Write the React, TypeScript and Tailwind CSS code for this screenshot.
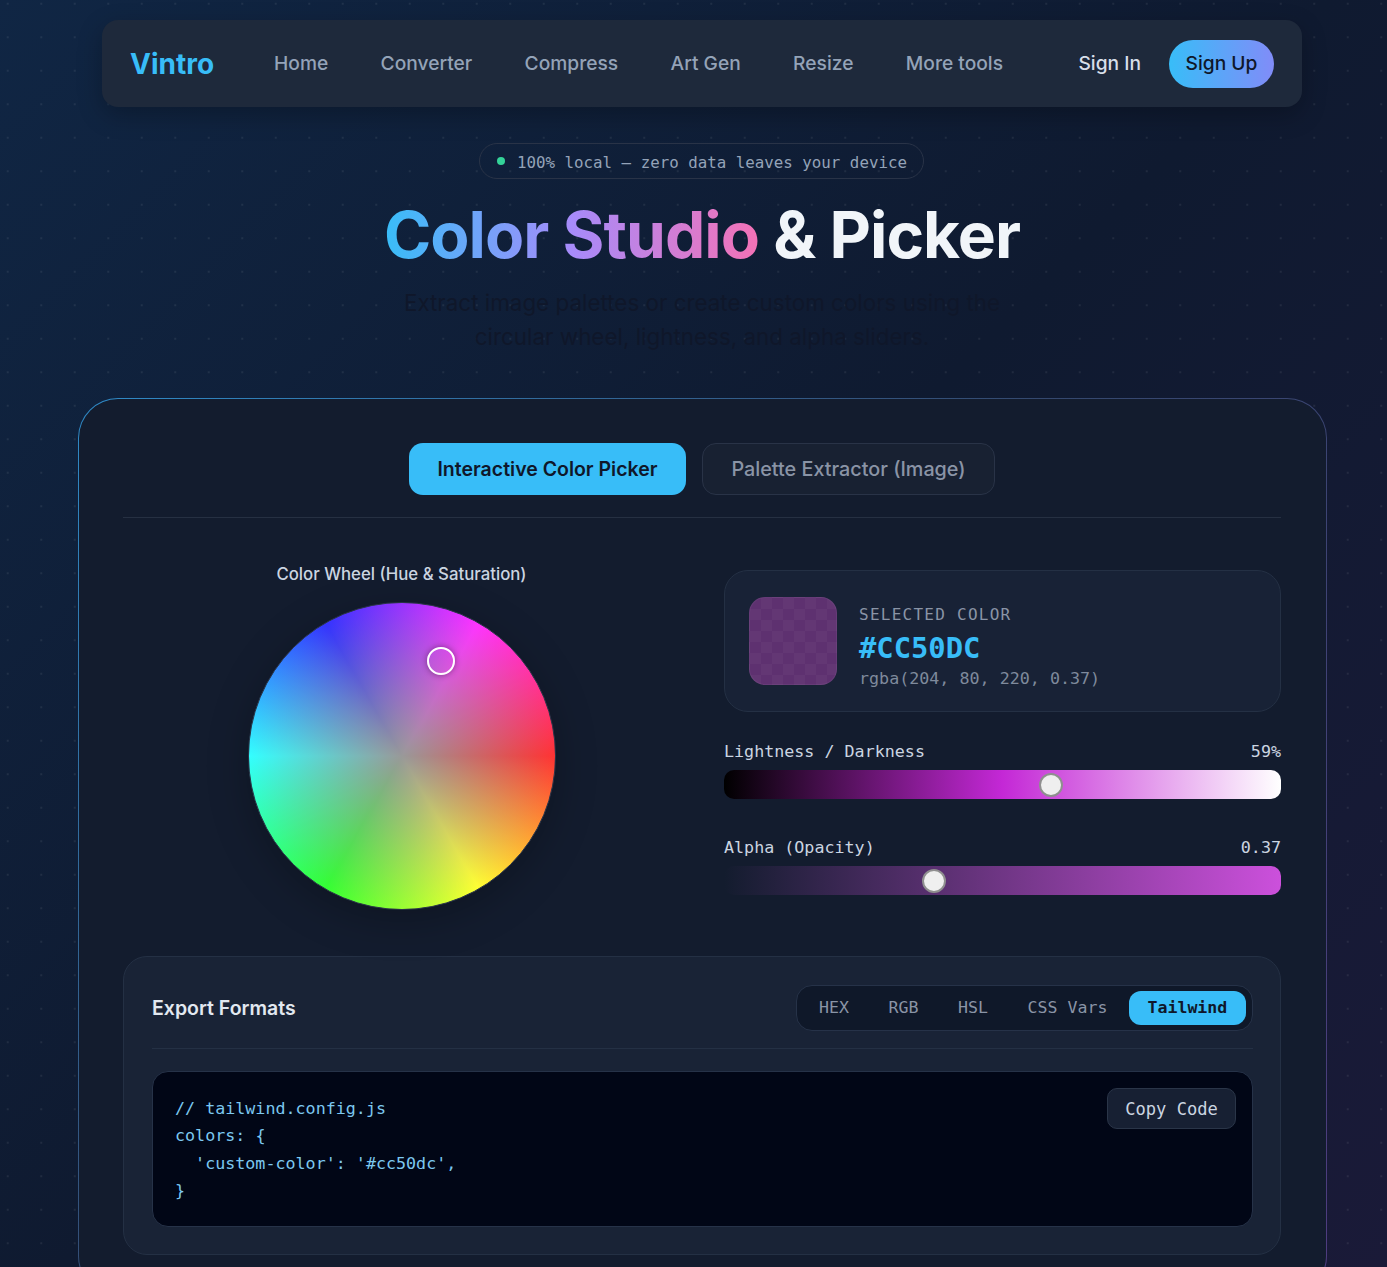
const mono = "font-['DejaVu_Sans_Mono',monospace]";

const navLinks = ['Home', 'Converter', 'Compress', 'Art Gen', 'Resize', 'More tools'];
const formats = ['HEX', 'RGB', 'HSL', 'CSS Vars'];

function Slider({ label, value, track, thumb }: { label: string; value: string; track: string; thumb: number }) {
  return (
    <div>
      <div className="flex justify-between text-[16.7px] leading-6 text-[#cbd5e1] mb-[7px]">
        <span>{label}</span>
        <span>{value}</span>
      </div>
      <div className={`relative h-[29px] rounded-[10px] ${track}`}>
        <div
          className="absolute top-[3px] w-[24px] h-[24px] -ml-[12px] rounded-full bg-[#efefef] border-2 border-[#8f8f8f]"
          style={{ left: thumb }}
        />
      </div>
    </div>
  );
}

export default function App() {
  return (
    <div className="h-[1267px] overflow-hidden font-['Inter',sans-serif] bg-[linear-gradient(135deg,#102644_0%,#0f1a30_50%,#1a1a38_100%)]">
      <div className="h-full bg-[radial-gradient(circle,rgba(255,255,255,0.07)_1px,transparent_1px)] bg-[length:33.5px_33.5px] bg-[position:-9px_-13px] flex flex-col items-center pt-5 pl-[17px]">
        <nav className="w-[1200px] h-[87px] shrink-0 rounded-2xl bg-[#1e293b] shadow-[0_8px_24px_rgba(0,0,0,0.25)] flex items-center pl-[28px] pr-[28px]">
          <span className="text-[28px] font-bold text-[#38bdf8] w-[144px]">Vintro</span>
          <div className="flex gap-[52.4px] text-[19.2px] font-medium text-[#94a3b8]">
            {navLinks.map(l => <a key={l}>{l}</a>)}
          </div>
          <div className="ml-auto flex items-center gap-7">
            <span className="text-[19.2px] font-medium text-[#d8dfe9]">Sign In</span>
            <button className="h-12 w-[105px] rounded-full bg-[linear-gradient(90deg,#38bdf8,#818cf8)] text-[19.2px] font-medium text-[#0f172a]">Sign Up</button>
          </div>
        </nav>

        <div className="mt-9 -ml-px h-9 w-[445px] shrink-0 rounded-full border border-[#293347] flex items-center pl-[17px] gap-[12px]">
          <span className="w-2 h-2 rounded-full bg-[#34d399]" />
          <span className={`${mono} pt-[3px] text-[15.8px] text-[#94a3b8]`}>100% local — zero data leaves your device</span>
        </div>

        <h1 className="mt-[18px] shrink-0 text-[64px] leading-[76px] font-bold tracking-[-0.95px] text-[#f1f5f9]">
          <span className="bg-[linear-gradient(90deg,#38bdf8,#a78bfa,#f472b6)] bg-clip-text text-transparent">Color Studio</span> &amp; Picker
        </h1>

        <p className="mt-[13px] shrink-0 w-[640px] text-center text-[22.4px] leading-[34px] text-[#0f172a]">
          Extract image palettes or create custom colors using the circular wheel, lightness, and alpha sliders.
        </p>

        <div className="mt-[44px] ml-px w-[1249px] shrink-0 rounded-[40px] p-px bg-[linear-gradient(135deg,#2f8bc8_0%,#34486e_45%,#4f3c80_100%)]">
          <div className="rounded-[39px] bg-[#131c2e] pl-[44px] pr-[45px] pt-[44px] pb-[40px]">
            <div className="flex justify-center gap-4 pb-[22px] border-b border-[#263042]">
              <button className="h-[52px] w-[277px] pt-[2px] rounded-[14px] bg-[#38bdf8] text-[19.5px] font-semibold text-[#0f172a]">Interactive Color Picker</button>
              <button className="h-[52px] w-[293px] pt-[2px] rounded-[14px] border border-[#293347] bg-[#182132] text-[19.8px] font-medium text-[#8a94a6]">Palette Extractor (Image)</button>
            </div>

            <div className="flex mt-[52px] gap-[44px]">
              <div className="w-[557px] -mt-2 flex flex-col items-center">
                <span className="text-[16.8px] font-medium leading-6 text-[#cbd5e1]">Color Wheel (Hue &amp; Saturation)</span>
                <div className="relative mt-[16px] w-[308px] h-[308px] rounded-full border border-[#2a3448] shadow-[0_10px_40px_rgba(0,0,0,0.25)] [background:radial-gradient(circle_closest-side,#999999_0%,rgba(153,153,153,0)_100%),conic-gradient(from_90deg,#ff3333,#ffff33,#33ff33,#33ffff,#3333ff,#ff33ff,#ff3333)]">
                  <div className="absolute left-[178px] top-[44px] w-7 h-7 rounded-full border-2 border-white shadow-[0_0_6px_rgba(0,0,0,0.4)]" />
                </div>
              </div>

              <div className="w-[557px] flex flex-col">
                <div className="h-[142px] rounded-3xl border border-[#243044] bg-[#182236] flex items-center pl-6 gap-[22px]">
                  <div className="w-[88px] h-[88px] rounded-2xl border border-white/5 bg-[#5e3170] [background-image:repeating-conic-gradient(rgba(255,255,255,0.03)_0%_25%,transparent_0%_50%)] bg-[length:22px_22px]" />
                  <div className={`${mono} pt-[10px]`}>
                    <div className="text-[16px] leading-6 tracking-[1.26px] text-[#8a94a6]">SELECTED COLOR</div>
                    <div className="mt-[1px] text-[28.8px] leading-10 font-bold text-[#38bdf8]">#CC50DC</div>
                    <div className="-mt-[2px] text-[16.7px] leading-6 text-[#7f8a9c]">rgba(204, 80, 220, 0.37)</div>
                  </div>
                </div>
                <div className={`${mono} mt-[27px] flex flex-col gap-9`}>
                  <Slider label="Lightness / Darkness" value="59%" thumb={327} track="bg-[linear-gradient(90deg,#000000,#c428d6_50%,#ffffff)]" />
                  <Slider label="Alpha (Opacity)" value="0.37" thumb={210} track="bg-[linear-gradient(90deg,rgba(204,80,220,0),#cc50dc)]" />
                </div>
              </div>
            </div>

            <div className="mt-[46px] h-[299px] rounded-3xl border border-[#243044] bg-[#192336] pl-7 pr-[27px] pt-7">
              <div className="flex items-center justify-between pb-[17px] border-b border-[#243044]">
                <span className="pt-[2px] text-[19.5px] font-semibold text-[#e2e8f0]">Export Formats</span>
                <div className={`${mono} flex items-center gap-[5.5px] h-[46px] w-[457px] rounded-2xl border border-[#263248] bg-[#0f1829] pl-[5px] text-[16.6px]`}>
                  {formats.map(f => <span key={f} className="px-[17px] text-[#8a94a6]">{f}</span>)}
                  <span className="-ml-px w-[117px] h-[34px] flex items-center justify-center rounded-xl bg-[#38bdf8] font-bold text-[#0f172a]">Tailwind</span>
                </div>
              </div>
              <div className={`${mono} relative mt-[22px] h-[156px] rounded-2xl border border-[#263248] bg-[#010616] px-[22px] pt-[23px] text-[16.7px] leading-[27.4px] text-[#7cc8f0] whitespace-pre`}>
                <div>// tailwind.config.js</div>
                <div>colors: {'{'}</div>
                <div>  'custom-color': '#cc50dc',</div>
                <div>{'}'}</div>
                <button className="absolute top-[16px] right-4 h-[41px] w-[129px] pt-[2px] rounded-[10px] border border-[#2a3548] bg-[#172033] text-[17.1px] text-[#cbd5e1]">Copy Code</button>
              </div>
            </div>
          </div>
        </div>
      </div>
    </div>
  );
}
